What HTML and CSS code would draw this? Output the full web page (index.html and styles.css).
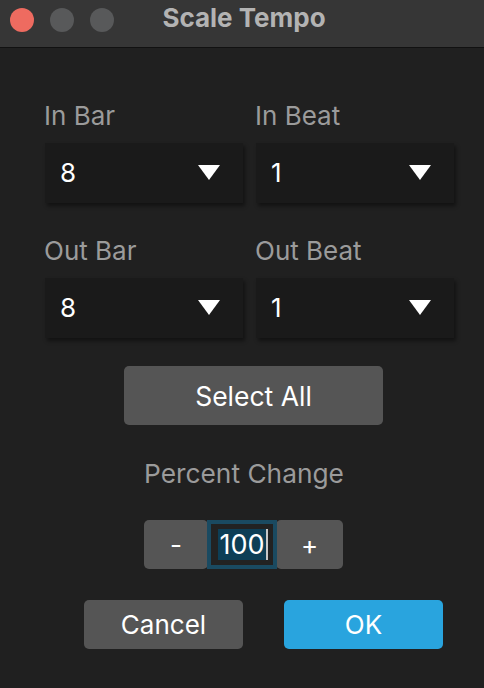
FILE: index.html
```html
<!DOCTYPE html>
<html>
<head>
<meta charset="utf-8">
<link rel="stylesheet" href="styles.css">
</head>
<body>
<div class="window">
  <div class="titlebar">
    <div class="lights">
      <span class="light red"></span>
      <span class="light gray"></span>
      <span class="light gray"></span>
    </div>
    <div class="title">Scale Tempo</div>
  </div>
  <div class="content">
    <div class="grid">
      <div class="field">
        <div class="label">In Bar</div>
        <div class="select"><span class="val">8</span><span class="tri"></span></div>
      </div>
      <div class="field">
        <div class="label">In Beat</div>
        <div class="select"><span class="val">1</span><span class="tri"></span></div>
      </div>
      <div class="field">
        <div class="label">Out Bar</div>
        <div class="select"><span class="val">8</span><span class="tri"></span></div>
      </div>
      <div class="field">
        <div class="label">Out Beat</div>
        <div class="select"><span class="val">1</span><span class="tri"></span></div>
      </div>
    </div>
    <div class="center">
      <div class="btn select-all">Select All</div>
    </div>
    <div class="pc-label">Percent Change</div>
    <div class="stepper">
      <div class="btn step">-</div>
      <div class="num"><span class="sel">100</span><span class="caret"></span></div>
      <div class="btn step">+</div>
    </div>
    <div class="actions">
      <div class="btn cancel">Cancel</div>
      <div class="btn ok">OK</div>
    </div>
  </div>
</div>
</body>
</html>
```
FILE: styles.css
```css
html, body {
  margin: 0;
  padding: 0;
  background: #202020;
}
body {
  width: 484px;
  height: 688px;
  overflow: hidden;
  font-family: Inter, "Liberation Sans", sans-serif;
}
.titlebar {
  height: 47px;
  background: #363636;
  border-bottom: 1px solid #111111;
  display: flex;
  align-items: center;
  position: relative;
}
.lights {
  display: flex;
  gap: 16px;
  padding-left: 10px;
  margin-top: -8px;
}
.light {
  width: 24px;
  height: 24px;
  border-radius: 50%;
  background: #58595a;
}
.light.red {
  background: #ee6b60;
}
.title {
  position: absolute;
  left: 0;
  right: 0;
  top: 3px;
  text-align: center;
  font-weight: 700;
  font-size: 26px;
  line-height: 30px;
  color: #b3b3b3;
  padding-left: 4px;
}
.content {
  padding: 51px 30px 0 45px;
}
.grid {
  display: grid;
  grid-template-columns: 198px 198px;
  column-gap: 13px;
  row-gap: 31px;
}
.label {
  font-size: 26px;
  line-height: 30px;
  color: #9b9b9b;
  height: 30px;
  padding-top: 2px;
  margin-bottom: 12px;
  margin-left: -1px;
  white-space: nowrap;
}
.select {
  height: 60px;
  background: #1a1a1a;
  box-shadow: 2px 3px 4px rgba(0, 0, 0, 0.45);
  display: flex;
  align-items: center;
  justify-content: space-between;
  padding: 0 23px 0 15px;
  box-sizing: border-box;
}
.val {
  color: #ffffff;
  font-size: 26px;
  line-height: 30px;
}
.tri {
  width: 0;
  height: 0;
  border-left: 11.5px solid transparent;
  border-right: 11.5px solid transparent;
  border-top: 15px solid #ffffff;
  margin-top: -2px;
}
.center {
  display: flex;
  padding-left: 79px;
  margin-top: 28px;
}
.btn {
  background: #555555;
  color: #ffffff;
  border-radius: 5px;
  display: flex;
  align-items: center;
  justify-content: center;
  font-size: 26px;
}
.select-all {
  width: 259px;
  height: 59px;
  font-size: 26.5px;
}
.pc-label {
  width: 240px;
  margin-left: 79px;
  text-align: center;
  font-size: 26.3px;
  line-height: 30px;
  color: #9b9b9b;
  padding-top: 2px;
  margin-top: 32px;
  white-space: nowrap;
}
.stepper {
  display: flex;
  margin-top: 31px;
  margin-left: 99px;
  height: 49px;
}
.step {
  width: 64px;
  height: 49px;
  font-size: 26px;
}
.step:last-child {
  width: 67px;
}
.num {
  width: 70px;
  height: 49px;
  box-sizing: border-box;
  border: 4px solid #1a4a61;
  background: #222222;
  margin: 0 -1px;
  display: flex;
  align-items: center;
  justify-content: center;
  position: relative;
  z-index: 1;
}
.sel {
  background: #0d3e56;
  color: #ffffff;
  font-size: 27px;
  line-height: 31px;
  padding: 0 1px;
  margin-left: 2px;
}
.caret {
  width: 2px;
  height: 31px;
  background: #c8c8c8;
}
.actions {
  display: flex;
  gap: 41px;
  margin-top: 31px;
  margin-left: 39px;
}
.cancel, .ok {
  width: 159px;
  height: 49px;
}
.ok {
  background: #29a4de;
}
```
